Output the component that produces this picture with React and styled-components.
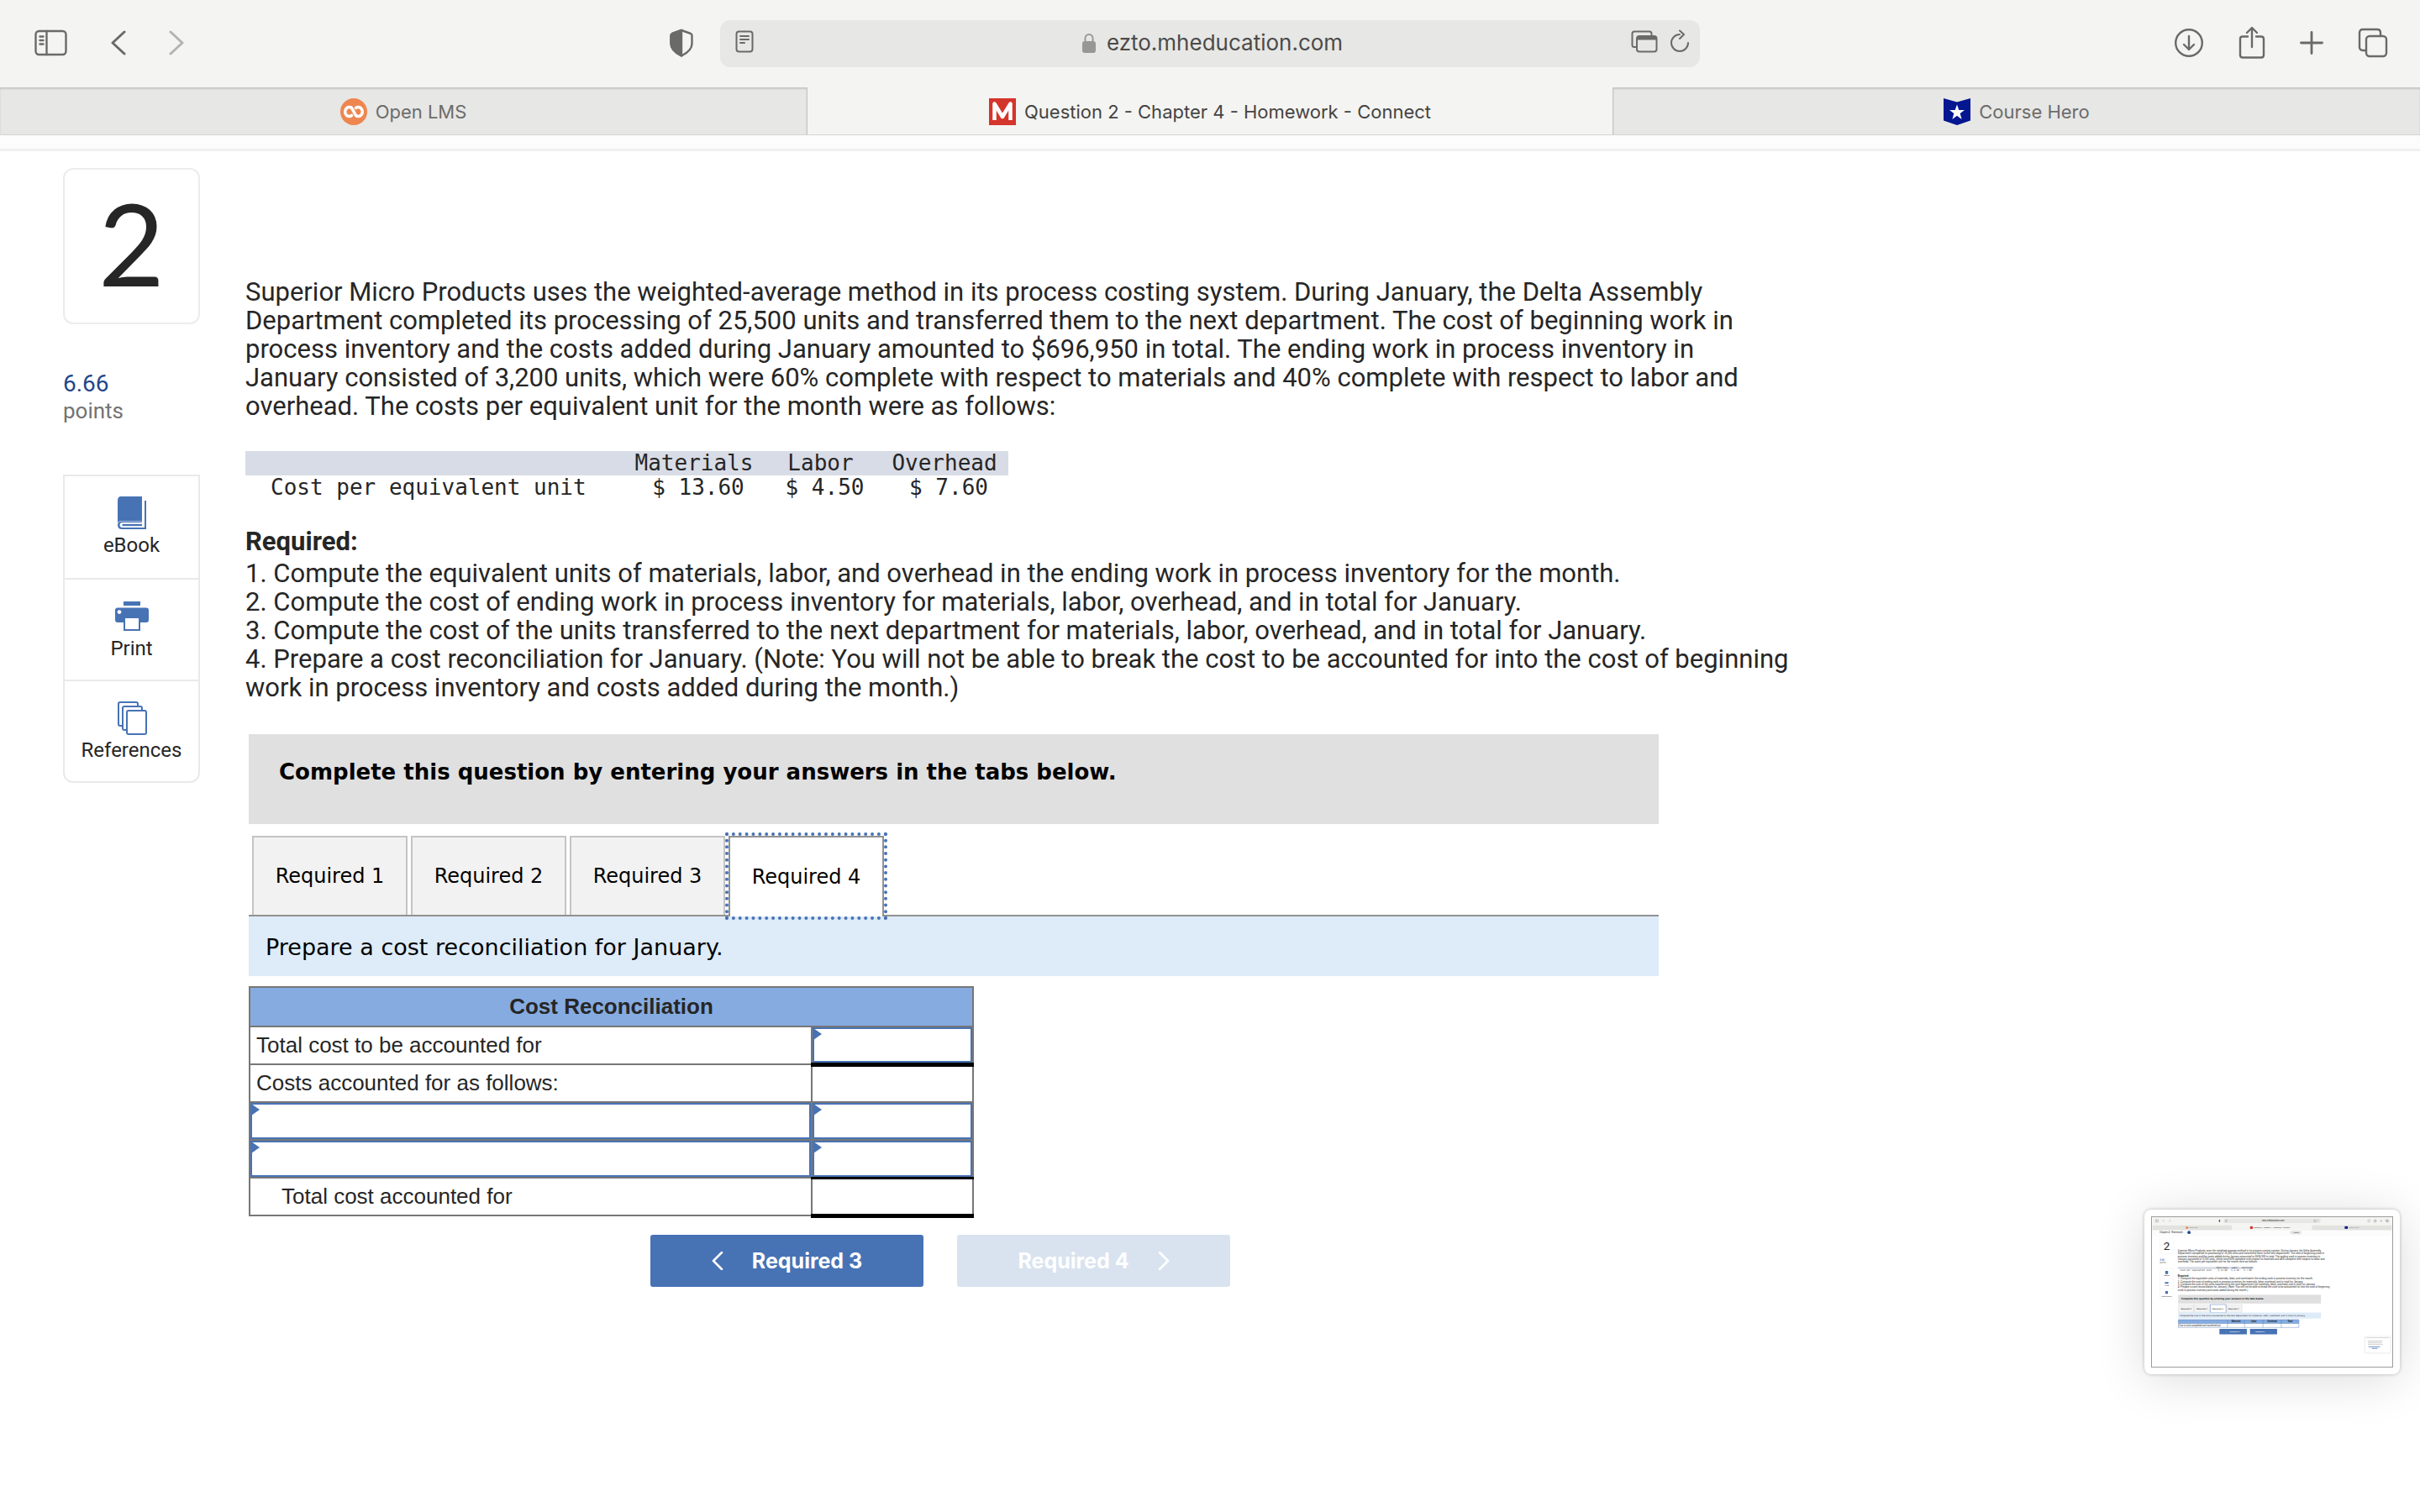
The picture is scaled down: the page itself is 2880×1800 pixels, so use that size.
import React, {useState} from 'react';
import styled, {createGlobalStyle, css} from 'styled-components';

const GlobalStyle = createGlobalStyle`
  * {
    box-sizing: border-box;
  }

  body {
    margin: 0;
    background: #fff;
    color: #262626;
    font-family: Roboto, "Liberation Sans", sans-serif;
  }

  button, input {
    font: inherit;
    color: inherit;
  }
`;

const Page = styled.div`
  min-height: 100vh;
  display: flex;
  flex-direction: column;
`;

const Toolbar = styled.header`
  display: grid;
  grid-template-columns: 1fr minmax(400px, 1166px) 1fr;
  align-items: center;
  height: 104px;
  background: #f4f4f2;
  color: #6a6a69;
`;

const ToolGroup = styled.div`
  display: flex;
  align-items: center;
  justify-content: ${({$end}) => ($end ? 'flex-end' : 'flex-start')};
  gap: ${({$gap}) => $gap}px;
  padding: ${({$end}) => ($end ? '0 38px 2px 0' : '0 32px 2px 41px')};
`;

const Spacer = styled.span`
  flex: 1;
`;

const IconButton = styled.button`
  display: flex;
  padding: 0;
  border: 0;
  background: none;
  color: ${({$faded}) => ($faded ? '#b3b3b2' : 'inherit')};
`;

const AddressBar = styled.div`
  display: flex;
  align-items: center;
  height: 56px;
  padding: 0 12px 6px 18px;
  gap: 14px;
  border-radius: 12px;
  background: #e7e7e5;
`;

const Address = styled.div`
  flex: 1;
  display: flex;
  align-items: center;
  justify-content: center;
  gap: 13px;
  padding: 3px 0 0 48px;
  font-family: Inter, sans-serif;
  font-size: 26px;
  color: #4b4b4a;
`;

const TabStrip = styled.nav`
  display: grid;
  grid-template-columns: repeat(3, 1fr);
  height: 57px;
  border-bottom: 1px solid #d5d5d4;
  background: #f4f4f2;
`;

const BrowserTab = styled.a`
  display: flex;
  align-items: center;
  justify-content: center;
  gap: 10px;
  padding-top: 2px;
  font-family: Inter, sans-serif;
  font-size: 22px;
  text-decoration: none;
  color: #6c6c6b;
  background: #e7e7e5;
  box-shadow: inset 0 2px 2px #c6c6c4;

  ${({$active}) => $active && css`
    color: #444443;
    background: #f4f4f2;
    box-shadow: none;
    border-left: 1px solid #c4c4c3;
    border-right: 1px solid #c4c4c3;
  `}
`;

const PageEdge = styled.div`
  height: 19px;
  border-bottom: 3px solid #f0f0f0;
  background: #fcfcfc;
`;

const Content = styled.div`
  display: flex;
  align-items: flex-start;
  gap: 54px;
  padding: 20px 75px 0;
`;

const Sidebar = styled.aside`
  flex: none;
  width: 163px;
`;

const NumberCard = styled.div`
  display: flex;
  align-items: center;
  justify-content: center;
  height: 186px;
  padding-bottom: 8px;
  border: 2px solid #ececec;
  border-radius: 12px;
  font-family: Lato, sans-serif;
  font-size: 136px;
  line-height: 1;
`;

const Points = styled.div`
  margin: 55px 0 60px;
  font-size: 26px;
  line-height: 32px;
  color: #737373;
`;

const PointsValue = styled.div`
  font-size: 28px;
  color: #23468a;
`;

const ToolList = styled.div`
  border: 2px solid #e9e9e9;
  border-radius: 0 0 12px 12px;
`;

const ToolButton = styled.button`
  display: flex;
  flex-direction: column;
  align-items: center;
  gap: 4px;
  width: 100%;
  height: 121px;
  padding: 24px 0 0;
  border: 0;
  background: none;
  font-size: 24px;
  line-height: 28px;

  & + & {
    border-top: 2px solid #e9e9e9;
  }

  svg {
    color: #4773b5;
  }
`;

const Main = styled.main`
  flex: 1;
  min-width: 0;
  padding-top: 131px;
`;

const Paragraph = styled.p`
  margin: 0;
  font-size: 31px;
  line-height: 34px;
`;

const Heading = styled.h2`
  margin: 33px 0 4px;
  font-size: 31px;
  line-height: 34px;
  font-weight: 700;
`;

const CostTable = styled.table`
  margin-top: 36px;
  border-collapse: collapse;
  font-family: "DejaVu Sans Mono", monospace;
  font-size: 26px;
  line-height: 29px;

  th, td {
    padding: 0;
    font-weight: 400;
    text-align: center;
  }

  thead {
    background: #d8dce6;
  }

  tbody th {
    padding-left: 30px;
    text-align: left;
  }

  tbody td {
    padding-left: 10px;
  }
`;

const CostColumn = styled.col`
  width: ${({$width}) => $width}px;
`;

const Worksheet = styled.section`
  width: 1678px;
  max-width: 100%;
  margin: 38px 0 0 4px;
  font-family: "DejaVu Sans", sans-serif;
  color: #000;
`;

const Banner = styled.div`
  height: 107px;
  padding: 29px 36px;
  background: #e0e0e0;
  font-size: 26px;
  line-height: 32px;
  font-weight: 700;
`;

const TabRow = styled.div`
  display: flex;
  gap: 4px;
  margin-top: 14px;
  padding-left: 4px;
  border-bottom: 2px solid #929292;
`;

const AnswerTab = styled.button`
  width: 185px;
  height: 94px;
  padding: 0;
  border: 2px solid #c4c4c4;
  border-bottom: 0;
  background: #f2f2f2;
  font-size: 24px;

  &[aria-selected='true'] {
    height: 96px;
    margin-bottom: -2px;
    border-color: #929292;
    background: #fff;
    outline: 4px dotted #4773b5;
  }
`;

const Instruction = styled.div`
  padding: 21px 20px 18px;
  background: #deebf8;
  font-size: 27px;
  line-height: 32px;
`;

const Reconciliation = styled.table`
  width: 863px;
  margin-top: 12px;
  border-collapse: collapse;
  table-layout: fixed;
  font-family: "Liberation Sans", Arial, sans-serif;
  font-size: 26px;
  color: #262626;
`;

const HeadCell = styled.th`
  height: 47px;
  padding: 0;
  border: 2px solid #777;
  background: #85abe0;
`;

const LabelCell = styled.th`
  height: 45px;
  padding: 0 0 0 ${({$indent}) => ($indent ? 37 : 7)}px;
  border: 2px solid #777;
  font-weight: 400;
  text-align: left;
`;

const EntryCell = styled.td`
  height: 45px;
  padding: 0;
  border: 2px solid #777;
  ${({$total}) => $total && css`
    border-bottom: 5px solid #000;
  `}
  ${({$sum}) => $sum && css`
    border-top: 3px solid #000;
  `}
`;

const EntryField = styled.label`
  display: block;
  position: relative;
  height: 100%;

  &::before {
    content: '';
    position: absolute;
    top: 1px;
    left: 1px;
    border: solid transparent;
    border-width: 7px 0 7px 10px;
    border-left-color: #4773b5;
  }
`;

const EntryInput = styled.input`
  display: block;
  width: 100%;
  height: 100%;
  padding: 0 14px;
  border: 2px solid #4773b5;
  border-radius: 0;
  background: #fff;
`;

const StepButtons = styled.div`
  display: flex;
  gap: 40px;
  margin: 20px 0 0 478px;
`;

const StepButton = styled.button`
  display: flex;
  align-items: center;
  justify-content: center;
  gap: 34px;
  width: 325px;
  height: 62px;
  border: 0;
  border-radius: 3px;
  background: #4773b5;
  color: #fff;
  font-family: Inter, sans-serif;
  font-size: 25px;
  font-weight: 700;

  &:disabled {
    background: #d9e3ef;
  }
`;

const Preview = styled.div`
  position: fixed;
  right: 24px;
  bottom: 164px;
  padding: 8px;
  border-radius: 8px;
  background: #fff;
  box-shadow: 0 0 4px rgba(0, 0, 0, 0.25), 0 6px 60px rgba(0, 0, 0, 0.14);

  svg {
    display: block;
    border: 1px solid #9b9b9b;
  }
`;

const Svg = ({w, h, children, sw = 2.4}) => (
    <svg width={w} height={h} viewBox={`0 0 ${w} ${h}`} fill="none" stroke="currentColor"
         strokeWidth={sw} strokeLinecap="round" strokeLinejoin="round" aria-hidden="true">
        {children}
    </svg>
);

const SidebarIcon = () => (
    <Svg w={40} h={32}>
        <rect x="1.500" y="2" width="36" height="28" rx="4"/>
        <path d="M14.500 2V30M6.500 8.500H10.500M6.500 13H10.500M6.500 17.500H10.500"/>
    </Svg>
);

const ChevronIcon = ({right}) => (
    <Svg w={18} h={30} sw={3}>
        <path d={right ? 'M2 2L16 15L2 28' : 'M16 2L2 15L16 28'}/>
    </Svg>
);

const ShieldIcon = () => (
    <Svg w={28} h={34}>
        <path d="M14 2L25 6Q26.500 6.600 26.500 8.500V18C26.500 24 21 29 14 32.500C7 29 1.500 24 1.500 18V8.500Q1.500 6.600 3 6Z"/>
        <path d="M14 2V32.500C7 29 1.500 24 1.500 18V8.500Q1.500 6.600 3 6Z" fill="currentColor"/>
    </Svg>
);

const ReaderIcon = () => (
    <Svg w={22} h={27} sw={2}>
        <rect x="1.500" y="1.500" width="19" height="24" rx="3"/>
        <path d="M6 7H16M6 11H16M6 15H11"/>
    </Svg>
);

const LockIcon = () => (
    <Svg w={16} h={24} sw={2}>
        <path d="M3.500 11V6.500a4.500 4.500 0 0 1 9 0V11" stroke="#9a9a98"/>
        <rect x="1" y="11" width="14" height="12" rx="2" fill="#979795" stroke="#979795"/>
    </Svg>
);

const WindowsIcon = () => (
    <Svg w={32} h={27} sw={2}>
        <path d="M6 20H4Q1.500 20 1.500 17.500V4Q1.500 1.500 4 1.500H22Q24.500 1.500 24.500 4V5.500"/>
        <rect x="7" y="7" width="23.500" height="18.500" rx="3"/>
        <path d="M7.500 9.500H30" strokeWidth="4" strokeLinecap="butt"/>
    </Svg>
);

const ReloadIcon = () => (
    <Svg w={24} h={28} sw={2}>
        <path d="M12 6A10 10 0 1 0 22 16M12 1.500L17 6L12 11"/>
    </Svg>
);

const DownloadIcon = () => (
    <Svg w={36} h={36}>
        <circle cx="18" cy="18" r="15.800"/>
        <path d="M18 10V26M12 20L18 26L24 20"/>
    </Svg>
);

const ShareIcon = () => (
    <Svg w={32} h={40}>
        <path d="M11 12.500H5Q2 12.500 2 15.500V34.500Q2 37.500 5 37.500H27Q30 37.500 30 34.500V15.500Q30 12.500 27 12.500H21M16 25V2.500M10 8L16 2L22 8"/>
    </Svg>
);

const PlusIcon = () => (
    <Svg w={28} h={28} sw={2.8}>
        <path d="M14 1.500V26.500M1.500 14H26.500"/>
    </Svg>
);

const TabsIcon = () => (
    <Svg w={36} h={36}>
        <path d="M9 27H6Q2 27 2 23V6Q2 2 6 2H23Q27 2 27 6V9"/>
        <rect x="10" y="10" width="24" height="24" rx="4"/>
    </Svg>
);

const OpenLmsLogo = () => (
    <Svg w={32} h={32} sw={3.6}>
        <circle cx="16" cy="16" r="16" fill="#ee8650" stroke="none"/>
        <path d="M13.500 11.500A5 5.400 0 1 0 13.500 20.500M18.500 11.500A5 5.400 0 1 1 18.500 20.500M13.500 11.500L18.500 20.500" stroke="#fff"/>
    </Svg>
);

const ConnectLogo = () => (
    <Svg w={32} h={32}>
        <rect width="32" height="32" fill="#d4352c" stroke="none"/>
        <path d="M6.500 26V6.500L16 22L25.500 6.500V26" stroke="#fff" strokeWidth="4.500" strokeLinecap="butt"/>
    </Svg>
);

const CourseHeroLogo = () => (
    <Svg w={32} h={32}>
        <path d="M0 0L16 4.500L32 0V26.500L16 32L0 26.500Z" fill="#041690" stroke="none"/>
        <path d="M16 7.500L18.300 14H25L19.700 18L21.600 25L16 20.800L10.400 25L12.300 18L7 14H13.700Z" fill="#fff" stroke="none"/>
    </Svg>
);

const BookIcon = () => (
    <svg width="36" height="40" viewBox="0 0 36 40" fill="currentColor" aria-hidden="true">
        <path d="M5 0H30V29H5.500Q3 29 1 31V5Q1 0 5 0Z"/>
        <path d="M33 5H35V39H6Q1 39 1 34Q1 29.500 6 29.500H30V31H7Q3.500 31 3.500 34T7 37H33Z"/>
        <path d="M6.500 32.800H30V35.200H6.500Z"/>
    </svg>
);

const PrintIcon = () => (
    <svg width="40" height="40" viewBox="0 0 40 40" fill="currentColor" aria-hidden="true">
        <path d="M10 2H30V7H10Z"/>
        <path fillRule="evenodd" d="M3 9.500H37Q40 9.500 40 12.500V24Q40 27 37 27H30V37H10V27H3Q0 27 0 24V12.500Q0 9.500 3 9.500ZM12 22V35H28V22ZM5 12.200A2.400 2.400 0 1 0 5 17A2.400 2.400 0 1 0 5 12.200Z"/>
    </svg>
);

const ReferencesIcon = () => (
    <Svg w={36} h={40} sw={2}>
        <path d="M6 29H4Q2 29 2 27V3Q2 1 4 1H23Q25 1 25 3V6"/>
        <path d="M11 34H9Q7 34 7 32V8Q7 6 9 6H28Q30 6 30 8V11"/>
        <rect x="12" y="11" width="23" height="28" rx="2"/>
    </Svg>
);

const StepChevron = ({right}) => (
    <Svg w={14} h={22} sw={2.6}>
        <path d={right ? 'M2 1L12 11L2 21' : 'M12 1L2 11L12 21'}/>
    </Svg>
);

const tabs = ['Required 1', 'Required 2', 'Required 3', 'Required 4'];

const intro = [
    'Superior Micro Products uses the weighted-average method in its process costing system. During January, the Delta Assembly',
    'Department completed its processing of 25,500 units and transferred them to the next department. The cost of beginning work in',
    'process inventory and the costs added during January amounted to $696,950 in total. The ending work in process inventory in',
    'January consisted of 3,200 units, which were 60% complete with respect to materials and 40% complete with respect to labor and',
    'overhead. The costs per equivalent unit for the month were as follows:',
];

const tasks = [
    '1. Compute the equivalent units of materials, labor, and overhead in the ending work in process inventory for the month.',
    '2. Compute the cost of ending work in process inventory for materials, labor, overhead, and in total for January.',
    '3. Compute the cost of the units transferred to the next department for materials, labor, overhead, and in total for January.',
    '4. Prepare a cost reconciliation for January. (Note: You will not be able to break the cost to be accounted for into the cost of beginning',
    'work in process inventory and costs added during the month.)',
];

const Lines = ({lines}) => lines.map((line) => (
    <React.Fragment key={line}>{line}<br/></React.Fragment>
));

const Entry = ({label}) => (
    <EntryField>
        <EntryInput type="text" aria-label={label}/>
    </EntryField>
);

// Small copy of the previous screen, drawn in page units
const PreviewScreen = () => (
    <svg width="288" height="180" viewBox="0 0 2880 1800" fontFamily="Roboto, sans-serif" fontSize="31" fill="#262626" aria-hidden="true">
        <rect width="2880" height="1800" fill="#fff"/>
        <rect width="2880" height="160" fill="#f4f4f2"/>
        <path d="M0 98H955V158H0ZM1920 98H2880V158H1920Z" fill="#e2e2e0"/>
        <rect x="857" y="18" width="1166" height="54" rx="12" fill="#e7e7e5"/>
        <g fill="none" stroke="#888" strokeWidth="4">
            <path d="M36 30H72V58H36ZM50 30V58M140 30L126 44L140 58M200 30L214 44L200 58M878 32H896V56H878ZM1944 32H1968V56H1944ZM1992 34V54"/>
            <circle cx="2606" cy="44" r="15"/>
            <path d="M2668 36H2694V60H2668ZM2681 52V26M2738 44H2766M2752 30V58M2808 30H2832V50H2808ZM2816 38H2840V58H2816Z"/>
        </g>
        <path d="M814 28A16 16 0 0 0 814 60Z" fill="#555"/>
        <text x="1320" y="54" fontSize="26">ezto.mheducation.com</text>
        <circle cx="416" cy="126" r="16" fill="#ee8650"/>
        <text x="444" y="134" fontSize="22" fill="#777">Open LMS</text>
        <rect x="1175" y="110" width="32" height="32" fill="#d4352c"/>
        <text x="1217" y="134" fontSize="22">Question 2 - Chapter 4 - Homework - Connect</text>
        <rect x="2314" y="110" width="36" height="30" fill="#041690"/>
        <text x="2360" y="134" fontSize="22" fill="#777">Course Hero</text>
        <rect y="160" width="2880" height="70" fill="#fcfcfc"/>
        <text x="88" y="194" fontSize="28">Chapter 4 - Homework</text>
        <circle cx="440" cy="184" r="19" fill="#23468a"/>
        <rect x="1655" y="162" width="140" height="46" rx="23" fill="#e5e5e5"/>
        <text x="1698" y="194" fontSize="24">Saved</text>
        <rect x="90" y="260" width="164" height="180" rx="10" fill="#fff" stroke="#ececec" strokeWidth="4"/>
        <text x="132" y="398" fontSize="136">2</text>
        <text x="90" y="522" fontSize="28" fill="#23468a">6.66</text>
        <text x="90" y="552" fontSize="26" fill="#777">points</text>
        <path d="M90 618H250V984H90ZM90 740H250M90 862H250" fill="none" stroke="#ececec" strokeWidth="4"/>
        <path d="M154 648H188V684H154ZM150 780H192V802H150ZM154 890H186V924H154Z" fill="#4773b5"/>
        <g fontSize="24" textAnchor="middle">
            <text x="171" y="712">eBook</text>
            <text x="171" y="832">Print</text>
            <text x="171" y="956">References</text>
        </g>
        {intro.map((line, i) => <text key={line} x="306" y={414 + i * 34}>{line}</text>)}
        <rect x="306" y="598" width="910" height="28" fill="#d8dce6"/>
        <g fontFamily="DejaVu Sans Mono, monospace" fontSize="26">
            <text x="770" y="620">Materials</text>
            <text x="952" y="620">Labor</text>
            <text x="1078" y="620">Overhead</text>
            <text x="336" y="648">Cost per equivalent unit</text>
            <text x="790" y="648">$ 13.60</text>
            <text x="948" y="648">$ 4.50</text>
            <text x="1100" y="648">$ 7.60</text>
        </g>
        <text x="306" y="714" fontWeight="700">Required:</text>
        {tasks.map((line, i) => <text key={line} x="306" y={752 + i * 34}>{line}</text>)}
        <rect x="310" y="934" width="1718" height="106" fill="#dfdfdf"/>
        <path d="M312 1054H500V1148H312ZM504 1054H690V1148H504ZM894 1054H1078V1148H894Z" fill="#f2f2f2" stroke="#c4c4c4" strokeWidth="3"/>
        <path d="M696 1052H886V1150H696Z" fill="#fff" stroke="#4773b5" strokeWidth="5"/>
        <rect x="310" y="1148" width="1718" height="72" fill="#deebf8"/>
        <g fontFamily="DejaVu Sans, sans-serif" fill="#000">
            <text x="348" y="990" fontSize="26" fontWeight="700">Complete this question by entering your answers in the tabs below.</text>
            <g fontSize="24">
                {tabs.map((tab, i) => <text key={tab} x={342 + i * 190} y="1110">{tab}</text>)}
            </g>
            <text x="330" y="1194" fontSize="25">Compute the cost of the units transferred to the next department for materials, labor, overhead, and in total for January.</text>
        </g>
        <rect x="312" y="1234" width="1450" height="46" fill="#85abe0"/>
        <path d="M312 1234H1762V1328H312ZM312 1280H1762M904 1234V1328M1108 1234V1328M1330 1234V1328M1550 1234V1328" fill="none" stroke="#4773b5" strokeWidth="4"/>
        <g fontSize="26" fontWeight="700" textAnchor="middle">
            <text x="1006" y="1268">Materials</text>
            <text x="1220" y="1268">Labor</text>
            <text x="1440" y="1268">Overhead</text>
            <text x="1656" y="1268">Total</text>
        </g>
        <text x="318" y="1314" fontSize="26">Cost of units completed and transferred out</text>
        <path d="M806 1346H1136V1410H806ZM1174 1346H1500V1410H1174Z" fill="#4773b5"/>
        <g fill="#fff" fontSize="24" fontWeight="700">
            <text x="880" y="1386">‹</text>
            <text x="930" y="1386">Required 2</text>
            <text x="1240" y="1386">Required 4</text>
            <text x="1410" y="1386">›</text>
        </g>
        <rect x="2550" y="1430" width="324" height="214" rx="20" fill="#efefef"/>
        <rect x="2562" y="1440" width="300" height="190" rx="10" fill="#fff"/>
        <path d="M2570 1452H2850" stroke="#ccc" strokeWidth="8"/>
        <path d="M2592 1490H2770M2592 1510H2760M2592 1530H2776" stroke="#999" strokeWidth="5"/>
        <path d="M2600 1560H2740M2640 1580H2710" stroke="#4773b5" strokeWidth="8"/>
    </svg>
);

const App = () => {

    const [selected, setSelected] = useState('Required 4');

    return (
        <Page>
            <GlobalStyle/>
            <Toolbar>
                <ToolGroup $gap={51}>
                    <IconButton aria-label="Show sidebar"><SidebarIcon/></IconButton>
                    <IconButton aria-label="Back"><ChevronIcon/></IconButton>
                    <IconButton aria-label="Forward" $faded><ChevronIcon right/></IconButton>
                    <Spacer/>
                    <IconButton aria-label="Privacy report"><ShieldIcon/></IconButton>
                </ToolGroup>
                <AddressBar>
                    <IconButton aria-label="Reader"><ReaderIcon/></IconButton>
                    <Address><LockIcon/>ezto.mheducation.com</Address>
                    <IconButton aria-label="Windows"><WindowsIcon/></IconButton>
                    <IconButton aria-label="Reload"><ReloadIcon/></IconButton>
                </AddressBar>
                <ToolGroup $gap={41} $end>
                    <IconButton aria-label="Downloads"><DownloadIcon/></IconButton>
                    <IconButton aria-label="Share"><ShareIcon/></IconButton>
                    <IconButton aria-label="New tab"><PlusIcon/></IconButton>
                    <IconButton aria-label="Tab overview"><TabsIcon/></IconButton>
                </ToolGroup>
            </Toolbar>
            <TabStrip>
                <BrowserTab href="#lms"><OpenLmsLogo/>Open LMS</BrowserTab>
                <BrowserTab href="#connect" $active><ConnectLogo/>Question 2 - Chapter 4 - Homework - Connect</BrowserTab>
                <BrowserTab href="#hero"><CourseHeroLogo/>Course Hero</BrowserTab>
            </TabStrip>
            <PageEdge/>
            <Content>
                <Sidebar>
                    <NumberCard>2</NumberCard>
                    <Points>
                        <PointsValue>6.66</PointsValue>
                        points
                    </Points>
                    <ToolList>
                        <ToolButton><BookIcon/>eBook</ToolButton>
                        <ToolButton><PrintIcon/>Print</ToolButton>
                        <ToolButton><ReferencesIcon/>References</ToolButton>
                    </ToolList>
                </Sidebar>
                <Main>
                    <Paragraph><Lines lines={intro}/></Paragraph>
                    <CostTable>
                        <colgroup>
                            <CostColumn $width={455}/>
                            <CostColumn $width={158}/>
                            <CostColumn $width={143}/>
                            <CostColumn $width={152}/>
                        </colgroup>
                        <thead>
                            <tr>
                                <td/>
                                <th>Materials</th>
                                <th>Labor</th>
                                <th>Overhead</th>
                            </tr>
                        </thead>
                        <tbody>
                            <tr>
                                <th>Cost per equivalent unit</th>
                                <td>$ 13.60</td>
                                <td>$ 4.50</td>
                                <td>$ 7.60</td>
                            </tr>
                        </tbody>
                    </CostTable>
                    <Heading>Required:</Heading>
                    <Paragraph><Lines lines={tasks}/></Paragraph>
                    <Worksheet>
                        <Banner>Complete this question by entering your answers in the tabs below.</Banner>
                        <TabRow role="tablist">
                            {tabs.map((tab) => (
                                <AnswerTab key={tab} role="tab" aria-selected={tab === selected} onClick={() => setSelected(tab)}>
                                    {tab}
                                </AnswerTab>
                            ))}
                        </TabRow>
                        <Instruction>Prepare a cost reconciliation for January.</Instruction>
                        <Reconciliation>
                            <colgroup>
                                <CostColumn $width={669}/>
                                <col/>
                            </colgroup>
                            <thead>
                                <tr><HeadCell colSpan={2}>Cost Reconciliation</HeadCell></tr>
                            </thead>
                            <tbody>
                                <tr>
                                    <LabelCell>Total cost to be accounted for</LabelCell>
                                    <EntryCell $total><Entry label="Total cost to be accounted for"/></EntryCell>
                                </tr>
                                <tr>
                                    <LabelCell>Costs accounted for as follows:</LabelCell>
                                    <EntryCell/>
                                </tr>
                                <tr>
                                    <EntryCell><Entry label="First item"/></EntryCell>
                                    <EntryCell><Entry label="First amount"/></EntryCell>
                                </tr>
                                <tr>
                                    <EntryCell><Entry label="Second item"/></EntryCell>
                                    <EntryCell><Entry label="Second amount"/></EntryCell>
                                </tr>
                                <tr>
                                    <LabelCell $indent>Total cost accounted for</LabelCell>
                                    <EntryCell $sum $total/>
                                </tr>
                            </tbody>
                        </Reconciliation>
                        <StepButtons>
                            <StepButton><StepChevron/>Required 3</StepButton>
                            <StepButton disabled>Required 4<StepChevron right/></StepButton>
                        </StepButtons>
                    </Worksheet>
                </Main>
            </Content>
            <Preview><PreviewScreen/></Preview>
        </Page>
    );
}

export default App;
